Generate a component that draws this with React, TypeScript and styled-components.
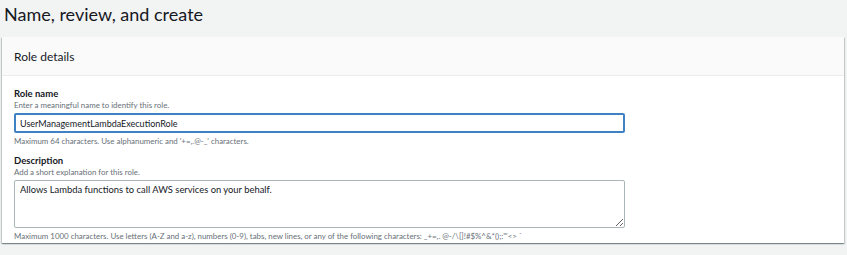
import styled, { createGlobalStyle } from 'styled-components'

const GlobalStyle = createGlobalStyle`
    html, body {
        margin: 0;
        padding: 0;
        background: #f2f3f3;
        font-family: Lato, "Liberation Sans", sans-serif;
        color: #16191f;
    }
`;

const App = () => {
    return (
        <Page>
            <GlobalStyle />
            <Title>Name, review, and create</Title>
            <Card>
                <CardHeader>Role details</CardHeader>
                <CardBody>
                    <Field>
                        <Label>Role name</Label>
                        <Hint>Enter a meaningful name to identify this role.</Hint>
                        <Input defaultValue="UserManagementLambdaExecutionRole" />
                        <Constraint>Maximum 64 characters. Use alphanumeric and '+=,.@-_' characters.</Constraint>
                    </Field>
                    <Field>
                        <Label>Description</Label>
                        <Hint>Add a short explanation for this role.</Hint>
                        <TextArea defaultValue="Allows Lambda functions to call AWS services on your behalf." />
                        <Constraint>Maximum 1000 characters. Use letters (A-Z and a-z), numbers (0-9), tabs, new lines, or any of the following characters: _+=,. @-/\[{}]!#$%^&*();:"'&lt;&gt; `</Constraint>
                    </Field>
                </CardBody>
            </Card>
        </Page>
    )
}

const Page = styled.div`
    width: 847px;
    height: 255px;
    overflow: hidden;
    box-sizing: border-box;
    padding: 0 3px 0 2px;
`;
const Title = styled.h1`
    margin: 0;
    padding: 3px 0 0 2px;
    height: 34px;
    box-sizing: border-box;
    font-size: 18px;
    font-weight: 400;
    line-height: 22px;
    color: #16191f;
`;
const Card = styled.div`
    background: #fff;
    box-shadow: 0 1px 1px 0 rgba(0, 28, 36, 0.3), 1px 1px 1px 0 rgba(0, 28, 36, 0.15), -1px 1px 1px 0 rgba(0, 28, 36, 0.15);
    margin-top: 3px;
`;
const CardHeader = styled.div`
    background: #fafafa;
    border-bottom: 1px solid #eaeded;
    height: 39px;
    box-sizing: border-box;
    padding: 0 12px;
    display: flex;
    align-items: center;
    font-size: 12px;
    font-weight: 400;
`;
const CardBody = styled.div`
    display: flex;
    flex-direction: column;
    gap: 9px;
    padding: 12px 12px 2px;
`;
const Field = styled.div`
    display: flex;
    flex-direction: column;
`;
const Label = styled.div`
    font-size: 9.5px;
    font-weight: 700;
    line-height: 12px;
`;
const Hint = styled.div`
    font-size: 7.9px;
    line-height: 10px;
    color: #687078;
    margin-bottom: 3px;
`;
const Input = styled.input`
    width: 611px;
    height: 20px;
    box-sizing: border-box;
    border: 2px solid #3f82c4;
    border-radius: 2px;
    padding: 0 4px;
    font-family: inherit;
    font-size: 9px;
    color: #16191f;
    outline: none;
`;
const TextArea = styled.textarea`
    width: 611px;
    height: 48px;
    box-sizing: border-box;
    border: 1px solid #aab7b8;
    border-radius: 2px;
    padding: 3px 5px;
    font-family: inherit;
    font-size: 9.4px;
    color: #16191f;
    resize: vertical;
    outline: none;
`;
const Constraint = styled.div`
    font-size: 7.9px;
    line-height: 10px;
    color: #687078;
    margin-top: 3px;
`;

export default App
